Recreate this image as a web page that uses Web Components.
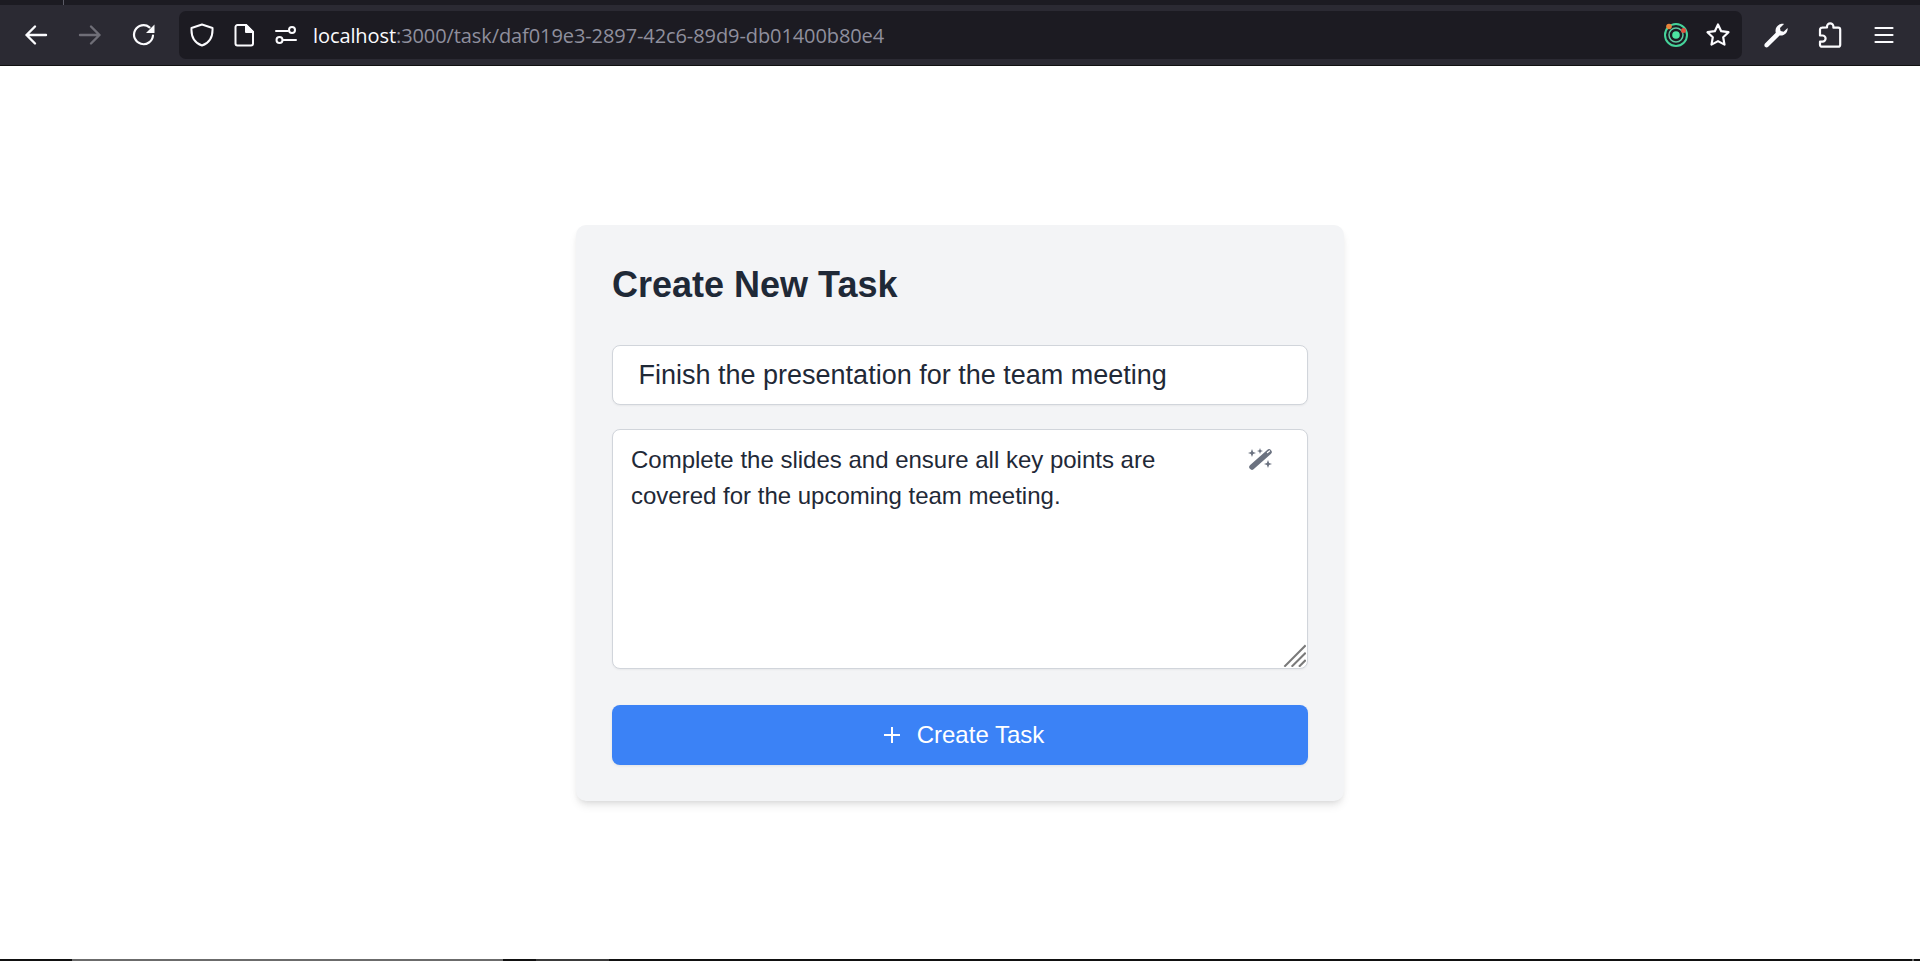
<!DOCTYPE html>
<html>
<head>
<meta charset="utf-8">
<title>Create New Task</title>
<style>
  html, body { margin: 0; height: 100%; background: #fff; }
  body { display: flex; flex-direction: column; height: 961px; overflow: hidden; font-family: "Liberation Sans", Arial, sans-serif; }
</style>
</head>
<body>
<browser-bar url-host="localhost" url-rest=":3000/task/daf019e3-2897-42c6-89d9-db01400b80e4"></browser-bar>
<task-page>
  <task-form heading="Create New Task">
    <title-field value="Finish the presentation for the team meeting"></title-field>
    <description-field>Complete the slides and ensure all key points are covered for the upcoming team meeting.</description-field>
    <submit-button>Create Task</submit-button>
  </task-form>
</task-page>
<task-strip></task-strip>

<script>
const barTemplate = (props) => `
  <style>
    :host {
      display: block;
      flex: none;
      background: #1c1b22;
      padding-top: 5px;
      position: relative;
    }
    .tick { position: absolute; left: 63px; top: 0; width: 1px; height: 5px; background: #5b5b66; }
    .toolbar {
      height: 61px;
      background: #2b2a33;
      display: flex;
      align-items: center;
      box-sizing: border-box;
      padding-bottom: 1px;
      border-bottom: 1px solid #111;
    }
    .nav { display: flex; align-items: center; width: 179px; flex: none; padding-left: 18px; box-sizing: border-box; gap: 18px; }
    .btn { width: 36px; height: 36px; display: flex; align-items: center; justify-content: center; flex: none; }
    .urlbar {
      width: 1563px;
      height: 48px;
      flex: none;
      background: #1c1b22;
      border-radius: 7px;
      display: flex;
      align-items: center;
      padding-left: 5px;
      box-sizing: border-box;
    }
    .url { font: 20px "Open Sans", "Noto Sans", sans-serif; color: #8f8f9d; margin-left: 9px; padding-top: 2px; white-space: nowrap; flex: 1; letter-spacing: -0.09px; }
    .url b { font-weight: 400; color: #fbfbfe; }
    .tools { display: flex; align-items: center; flex: none; padding-left: 16px; gap: 18px; }
    .url-icons { display: flex; gap: 6px; align-items: center; flex: none; }
    .end-icons { display: flex; gap: 6px; align-items: center; flex: none; padding-right: 6px; }
    svg { display: block; }
  </style>
  <div class="tick"></div>
  <div class="toolbar">
    <div class="nav">
      <div class="btn"><svg width="24" height="24" viewBox="0 0 24 24" fill="none" stroke="#fbfbfe" stroke-width="2.4" stroke-linecap="round" stroke-linejoin="round"><path d="M22 12H2.500M11 3.500 2.500 12l8.500 8.500"/></svg></div>
      <div class="btn"><svg width="24" height="24" viewBox="0 0 24 24" fill="none" stroke="#6f6e77" stroke-width="2.400" stroke-linecap="round" stroke-linejoin="round"><path d="M2 12h19.500M13 3.500l8.500 8.500-8.500 8.500"/></svg></div>
      <div class="btn"><svg width="24" height="24" viewBox="0 0 24 24" fill="none" stroke="#fbfbfe" stroke-width="2.200" stroke-linecap="round"><path d="M21 12.500A9.500 9.500 0 1 1 17.500 4.300"/><path d="M22.500 1.500v8.500H14z" fill="#fbfbfe" stroke="none"/></svg></div>
    </div>
    <div class="urlbar">
      <div class="url-icons">
        <div class="btn"><svg width="24" height="24" viewBox="0 0 24 24" fill="none" stroke="#fbfbfe" stroke-width="2" stroke-linejoin="round"><path d="M12 1.500 22.500 5c.5 9-3 15-10.500 17.500C4.500 20 1 14 1.500 5z"/></svg></div>
        <div class="btn"><svg width="24" height="24" viewBox="0 0 24 24" fill="none" stroke="#fbfbfe" stroke-width="2" stroke-linejoin="round"><path d="M5.500 2h8.500l7 7v11.500a2 2 0 0 1-2 2H5.500a2 2 0 0 1-2-2V4a2 2 0 0 1 2-2z"/><path d="M14 2v7h7z" fill="#fbfbfe"/></svg></div>
        <div class="btn"><svg width="24" height="24" viewBox="0 0 24 24" fill="none" stroke="#fbfbfe" stroke-width="2" stroke-linecap="round"><circle cx="18" cy="7" r="3"/><circle cx="5.500" cy="17" r="3"/><path d="M2 8h12M9.500 17H22"/></svg></div>
      </div>
      <div class="url"><b>${props.host}</b>${props.rest}</div>
      <div class="end-icons">
        <div class="btn"><svg width="26" height="26" viewBox="0 0 26 26" fill="none"><circle cx="13" cy="13" r="11" stroke="#45d39a" stroke-width="2"/><circle cx="13" cy="13" r="7" stroke="#5fc7a0" stroke-width="1.500"/><circle cx="13" cy="13" r="3.800" fill="#4de3a1"/><circle cx="6" cy="4.500" r="2.800" fill="#e8843a"/><circle cx="20.500" cy="8.500" r="2.500" fill="#e0503f"/></svg></div>
        <div class="btn"><svg width="26" height="26" viewBox="0 0 26 26" fill="none" stroke="#fbfbfe" stroke-width="2.200" stroke-linejoin="round"><path d="m13 2.500 3.200 6.700 7.300 1-5.300 5.100 1.300 7.300-6.500-3.500-6.500 3.500 1.300-7.300-5.300-5.100 7.300-1z"/></svg></div>
      </div>
    </div>
    <div class="tools">
      <div class="btn"><svg width="26" height="26" viewBox="0 0 26 26" fill="#fbfbfe"><path d="M2 21.500 12.800 10.800c-1-3.500.5-7.500 5-8.800 1.300-.3 2.500-.2 3.200.1l-4 4 .6 3 3 .6 4-3.800c.5 4.200-2.800 8.200-8 7.600L5.200 24.800c-1 1-2.300.9-3.200 0-.8-.9-.9-2.300 0-3.300z"/></svg></div>
      <div class="btn"><svg width="24" height="26" viewBox="0 0 24 26" fill="none" stroke="#fbfbfe" stroke-width="2.200" stroke-linejoin="round"><path d="M9 5.500V4.500a3.200 3.200 0 0 1 6.400 0v1.200h4.800a2 2 0 0 1 2 2v15a2 2 0 0 1-2 2H4a2 2 0 0 1-2-2v-3h2.500a3 3 0 0 0 0-6.200H2V7.700a2 2 0 0 1 2-2z"/></svg></div>
      <div class="btn"><svg width="24" height="24" viewBox="0 0 24 24" fill="none" stroke="#fbfbfe" stroke-width="2.200" stroke-linecap="round"><path d="M3.500 5h17M3.500 12h17M3.500 19h17"/></svg></div>
    </div>
  </div>`;

customElements.define("browser-bar", class BrowserBar extends HTMLElement {
  constructor() {
    super();
    this.shadow = this.attachShadow({ mode: "open" });
  }
  connectedCallback() {
    this.shadow.innerHTML = barTemplate({
      host: this.getAttribute("url-host"),
      rest: this.getAttribute("url-rest"),
    });
  }
});

customElements.define("task-page", class TaskPage extends HTMLElement {
  constructor() {
    super();
    this.attachShadow({ mode: "open" }).innerHTML = `
      <style>
        :host { display: flex; flex: 1 1 auto; justify-content: center; align-items: flex-start; padding-top: 159px; min-height: 0; }
      </style>
      <slot></slot>`;
  }
});

customElements.define("task-form", class TaskForm extends HTMLElement {
  constructor() {
    super();
    this.shadow = this.attachShadow({ mode: "open" });
  }
  connectedCallback() {
    this.shadow.innerHTML = `
      <style>
        :host {
          display: block;
          width: 768px;
          box-sizing: border-box;
          padding: 36px;
          background: #f3f4f6;
          border-radius: 10px;
          box-shadow: 0 6px 10px -2px rgba(0,0,0,.1), 0 3px 6px -3px rgba(0,0,0,.1);
        }
        h2 { margin: 0 0 36px; font: 700 36px/48px "Liberation Sans", Arial, sans-serif; color: #1f2937; height: 48px; }
        .fields { display: flex; flex-direction: column; gap: 24px; }
        .fields ::slotted(submit-button) { margin-top: 12px; }
      </style>
      <h2>${this.getAttribute("heading")}</h2>
      <div class="fields"><slot></slot></div>`;
  }
});

customElements.define("title-field", class TitleField extends HTMLElement {
  constructor() {
    super();
    this.shadow = this.attachShadow({ mode: "open" });
  }
  connectedCallback() {
    this.shadow.innerHTML = `
      <style>
        :host {
          display: block;
          height: 60px;
          box-sizing: border-box;
          background: #fff;
          border: 1px solid #d1d5db;
          border-radius: 8px;
          box-shadow: 0 1px 2px rgba(0,0,0,.05);
          padding: 0 25.500px;
          font-size: 27px;
          line-height: 58px;
          color: #1f2937;
          white-space: nowrap;
        }
      </style>
      ${this.getAttribute("value")}`;
  }
});

customElements.define("description-field", class DescriptionField extends HTMLElement {
  constructor() {
    super();
    this.attachShadow({ mode: "open" }).innerHTML = `
      <style>
        :host {
          display: block;
          position: relative;
          height: 240px;
          box-sizing: border-box;
          background: #fff;
          border: 1px solid #d1d5db;
          border-radius: 8px;
          box-shadow: 0 1px 2px rgba(0,0,0,.05);
          padding: 12px 18px;
          font-size: 24px;
          line-height: 36px;
          color: #1f2937;
        }
        .text { width: 560px; }
        .wand { position: absolute; top: 15px; right: 35px; }
        .grip { position: absolute; right: 1px; bottom: 1px; }
      </style>
      <div class="text"><slot></slot></div>
      <svg class="wand" width="28" height="28" viewBox="0 0 28 28" fill="#6b7280">
        <path d="M8 22 25 7" stroke="#6b7280" stroke-width="5.500" stroke-linecap="round"/>
        <path d="M23.500 7.500 25.500 6" stroke="#fff" stroke-width="1.300" stroke-linecap="round"/>
        <path d="m8 4 1.100 2.900L12 8 9.100 9.100 8 12 6.900 9.100 4 8l2.900-1.100zM16 3l.8 2.200L19 6l-2.200.8L16 9l-.8-2.200L13 6l2.200-.8zM24 15l1.100 2.900L28 19l-2.900 1.100L24 23l-1.100-2.900L20 19l2.900-1.100z"/>
      </svg>
      <svg class="grip" width="23" height="23" viewBox="0 0 22 22" stroke="#7a7a7a" stroke-width="2" stroke-linecap="square"><path d="M2 21 21 2M9 21 21 9M16 21l5-5"/></svg>`;
  }
});

customElements.define("submit-button", class SubmitButton extends HTMLElement {
  constructor() {
    super();
    this.attachShadow({ mode: "open" }).innerHTML = `
      <style>
        :host {
          display: flex;
          align-items: center;
          justify-content: center;
          gap: 15px;
          height: 60px;
          padding-left: 6px;
          background: #3b82f6;
          color: #fff;
          border-radius: 8px;
          font-size: 24px;
          box-shadow: 0 1px 3px rgba(0,0,0,.08);
        }
      </style>
      <svg width="20" height="20" viewBox="0 0 20 20" fill="none" stroke="#fff" stroke-width="2"><path d="M10 2v16M2 10h16"/></svg>
      <span><slot></slot></span>`;
  }
});

customElements.define("task-strip", class TaskStrip extends HTMLElement {
  constructor() {
    super();
    this.attachShadow({ mode: "open" }).innerHTML = `
      <style>
        :host { display: flex; flex: none; height: 2px; background: #111; }
        .a { margin-left: 72px; width: 431px; background: #6b6b6b; }
        .b { margin-left: 33px; width: 73px; background: #3a3a3a; }
        .c { margin-left: auto; margin-right: 6px; width: 2px; background: #6b6b6b; }
      </style>
      <div class="a"></div><div class="b"></div><div class="c"></div>`;
  }
});
</script>
</body>
</html>
